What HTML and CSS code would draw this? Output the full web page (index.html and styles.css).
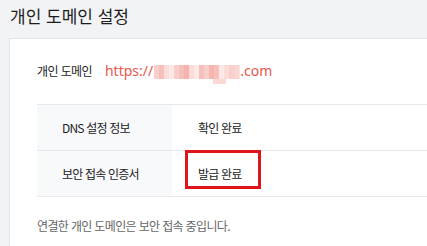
FILE: index.html
```html
<!DOCTYPE html>
<html lang="ko">
<head>
<meta charset="utf-8">
<link rel="stylesheet" href="styles.css">
</head>
<body>
<div class="page">
  <h1 class="title">개인 도메인 설정</h1>
  <section class="card">
    <div class="domain-row">
      <span class="domain-label">개인 도메인</span>
      <span class="domain-url">https://<span class="mosaic" aria-hidden="true"><i class="c1"></i><i class="c3"></i><i class="c2"></i><i class="c4"></i><i class="c1"></i><i class="c3"></i><i class="c5"></i><i class="c2"></i><i class="c4"></i><i class="c3"></i><i class="c1"></i><i class="c5"></i><i class="c3"></i><i class="c4"></i><i class="c2"></i><i class="c1"></i><i class="c6"></i></span>.com</span>
    </div>
    <div class="info-table">
      <div class="cell head">DNS 설정 정보</div>
      <div class="cell value">확인 완료</div>
      <div class="cell head">보안 접속 인증서</div>
      <div class="cell value"><span class="highlight"></span>발급 완료</div>
    </div>
    <p class="note">연결한 개인 도메인은 보안 접속 중입니다.</p>
  </section>
</div>
</body>
</html>
```
FILE: styles.css
```css
html, body {
  margin: 0;
  padding: 0;
  background: #f2f3f5;
  overflow: hidden;
}
body {
  font-family: "Noto Sans CJK KR", "Noto Sans", sans-serif;
  color: #222;
}
.page {
  padding-left: 9px;
  width: 700px;
}
.title {
  margin: 0 0 7px 1px;
  font-size: 17px;
  line-height: 31px;
  font-weight: 400;
  color: #1e1e1e;
}
.card {
  background: #fff;
  border: 1px solid #e2e5e9;
  padding: 20px 0 30px 27px;
}
.domain-row {
  display: flex;
  align-items: center;
  height: 22px;
}
.domain-label {
  font-size: 12px;
  letter-spacing: -0.6px;
  color: #222;
  margin-right: 13px;
}
.domain-url {
  display: inline-flex;
  align-items: center;
  font-family: "Noto Sans", sans-serif;
  font-size: 14px;
  color: #e5584d;
}
.mosaic {
  position: relative;
  display: inline-flex;
  width: 86px;
  height: 14px;
  margin: 3px 0 0 1px;
  background: #fce3e0;
}
.mosaic i {
  display: block;
  width: 5px;
  height: 14px;
}
.mosaic .c1 { background: #f9cfcb; }
.mosaic .c2 { background: #fbdcd9; }
.mosaic .c3 { background: #f7bfb9; }
.mosaic .c4 { background: #fde9e7; }
.mosaic .c5 { background: #f5b4ad; }
.mosaic .c6 { background: #fad6d2; }
.mosaic::after {
  content: "";
  position: absolute;
  left: 59px;
  top: 14px;
  width: 13px;
  height: 5px;
  background: #fbdad6;
}
.info-table {
  margin-top: 23px;
  display: grid;
  grid-template-columns: 135px 1fr;
  border-top: 1px solid #e6e8eb;
}
.cell {
  height: 45px;
  display: flex;
  align-items: center;
  border-bottom: 1px solid #e6e8eb;
  font-size: 12px;
  letter-spacing: -0.8px;
}
.cell.head {
  background: #f8f9fb;
  padding-left: 25px;
}
.cell.value {
  padding-left: 26px;
  position: relative;
}
.highlight {
  position: absolute;
  left: 13px;
  top: -1px;
  width: 70px;
  height: 33px;
  border: 3px solid #e0151b;
}
.note {
  margin: 20px 0 0;
  font-size: 12px;
  line-height: 18px;
  letter-spacing: -0.65px;
  color: #666;
}
```
